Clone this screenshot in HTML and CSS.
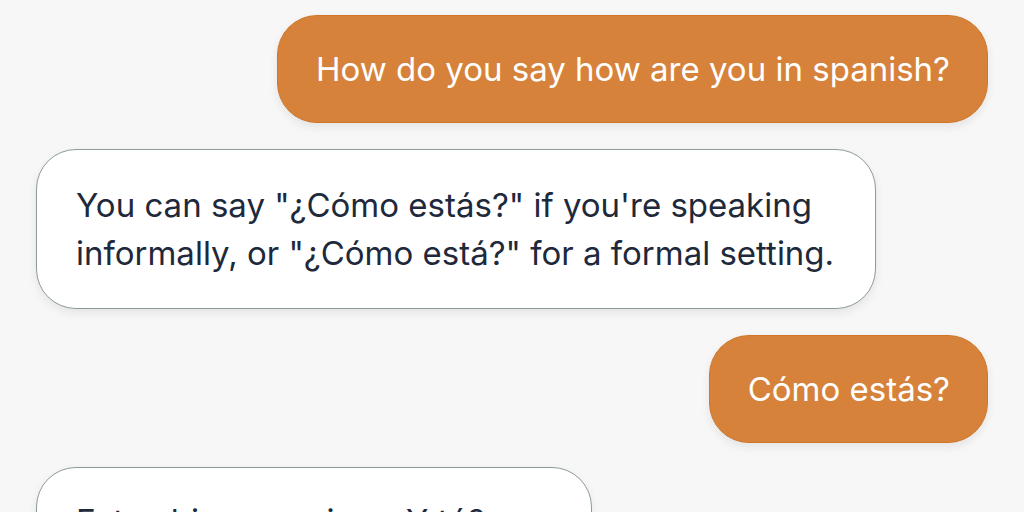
FILE: index.html
```html
<!DOCTYPE html>
<html lang="en">
<head>
<meta charset="utf-8">
<title>Chat</title>
<link rel="stylesheet" href="styles.css">
</head>
<body>
<main class="chat">
  <div class="msg bot ghost"></div>
  <div class="msg user">How do you say how are you in spanish?</div>
  <div class="msg bot wide">You can say "¿Cómo estás?" if you're speaking informally, or "¿Cómo está?" for a formal setting.</div>
  <div class="msg user">Cómo estás?</div>
  <div class="msg bot mid">Estoy bien, gracias. ¿Y tú? That means "I'm fine, thanks."</div>
</main>
</body>
</html>
```
FILE: styles.css
```css
html, body {
  margin: 0;
  padding: 0;
  background: #f7f7f7;
  height: 100%;
  overflow: hidden;
}
.chat {
  display: flex;
  flex-direction: column;
  gap: 26px;
  padding: 0 36px;
  font-family: Inter, "Noto Sans", sans-serif;
  font-size: 33px;
  line-height: 48px;
}
.msg {
  box-sizing: border-box;
  border-radius: 40px;
  box-shadow: 0 4px 10px rgba(0, 0, 0, 0.08);
}
.user {
  align-self: flex-end;
  background: #d6823b;
  color: #ffffff;
  border: 1px solid #cf7629;
  padding: 29px 37px 29px 38px;
}
.bot {
  align-self: flex-start;
  background: #ffffff;
  color: #1e293b;
  border: 1px solid #8d9c9b;
  padding: 31px 38px 31px 39px;
}
.ghost {
  width: 290px;
  height: 60px;
  margin-top: -75px;
  margin-bottom: 0;
  border-color: transparent;
}
.wide {
  max-width: 840px;
}
.mid {
  max-width: 556px;
  margin-top: -2px;
  padding-top: 29px;
}
```
